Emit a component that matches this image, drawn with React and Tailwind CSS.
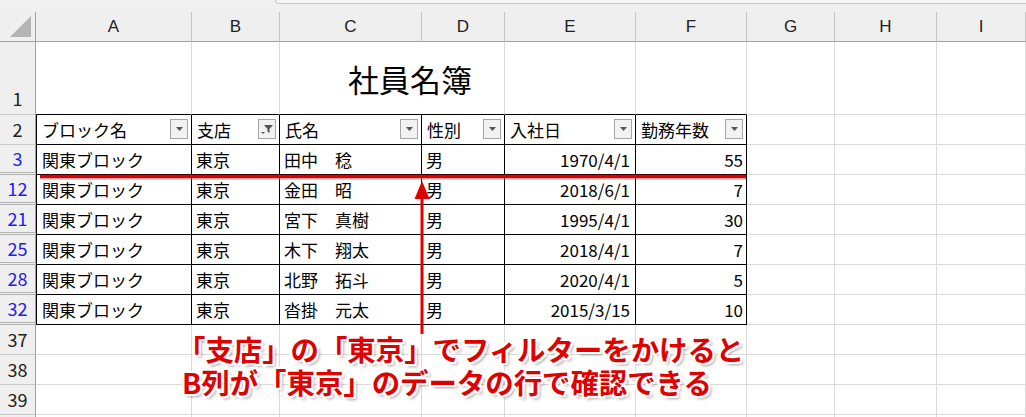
import React from 'react';

const ROWS = [
  { n: 3, a: '関東ブロック', b: '東京', c: '田中　稔', d: '男', e: '1970/4/1', f: 55 },
  { n: 12, a: '関東ブロック', b: '東京', c: '金田　昭', d: '男', e: '2018/6/1', f: 7 },
  { n: 21, a: '関東ブロック', b: '東京', c: '宮下　真樹', d: '男', e: '1995/4/1', f: 30 },
  { n: 25, a: '関東ブロック', b: '東京', c: '木下　翔太', d: '男', e: '2018/4/1', f: 7 },
  { n: 28, a: '関東ブロック', b: '東京', c: '北野　拓斗', d: '男', e: '2020/4/1', f: 5 },
  { n: 32, a: '関東ブロック', b: '東京', c: '沓掛　元太', d: '男', e: '2015/3/15', f: 10 },
];

const HEADERS = ['ブロック名', '支店', '氏名', '性別', '入社日', '勤務年数'];
const LETTERS = ['A', 'B', 'C', 'D', 'E', 'F', 'G', 'H', 'I'];

// cell border styles
const gridCell = 'box-border border-r border-b border-[#dadada]';
const tableCell = 'box-border border-r border-b border-black';

const FilterButton = ({ active }) => (
  <div className="ml-auto mr-[3px] mb-px flex h-[20px] w-[18px] shrink-0 items-center justify-center border border-[#a6a6a6] bg-[#f2f2f2]">
    {active ? (
      <svg width="14" height="12" viewBox="0 0 14 12">
        <path d="M4 2h9l-3.5 4v4l-2-1.2V6z" fill="#555" />
        <path d="M1 9h4l-2 2z" fill="#555" />
      </svg>
    ) : (
      <svg width="7" height="4" viewBox="0 0 7 4">
        <path d="M0 0h7L3.5 4z" fill="#555" />
      </svg>
    )}
  </div>
);

const RowHead = ({ n, blue, hidden, tall }) => (
  <div
    className={`box-border flex justify-center border-r border-[#a0a0a0] bg-[#efefef] text-[18px] ${
      hidden ? 'border-b-[3px] border-b-[#b4b4b4] border-double' : 'border-b border-b-[#c8c8c8]'
    } ${tall ? 'items-end pb-[2px]' : 'items-center'} ${blue ? 'text-[#2020e8]' : 'text-[#222]'}`}
  >
    {n}
  </div>
);

export default function App() {
  return (
    <div className="relative h-[417px] w-[1026px] overflow-hidden bg-white font-['Noto_Sans_CJK_JP','Noto_Sans',sans-serif] text-[17px] text-black">
      {/* top strip */}
      <div className="h-[12px] bg-[#f0f0f0]">
        <div className="ml-[275px] h-[4px] rounded-bl-[6px] border-b border-l border-[#c8c8c8] bg-[#f6f6f6]" />
      </div>

      <div className="grid grid-cols-[36px_156px_88px_142px_83px_131px_111px_88px_102px_89px] grid-rows-[30px_73px_repeat(11,30px)]">
        {/* column header row */}
        <div className="box-border flex items-end justify-end border-r border-b border-[#a0a0a0] bg-[#efefef] pr-[3px] pb-[3px]">
          <svg width="22" height="22" viewBox="0 0 22 22">
            <path d="M21 0V21H0z" fill="#b4b4b4" />
          </svg>
        </div>
        {LETTERS.map((l) => (
          <div
            key={l}
            className="box-border flex items-center justify-center border-r border-b border-r-[#c4c4c4] border-b-[#a0a0a0] bg-[#efefef] font-['Liberation_Sans',sans-serif] text-[17px] text-[#222]"
          >
            {l}
          </div>
        ))}

        {/* row 1: title */}
        <RowHead n={1} tall />
        <div className={`${gridCell} border-b-black`} />
        <div className={`${gridCell} border-b-black`} />
        <div className="box-border flex items-center border-b border-black pl-[68px]">
          <span className="whitespace-nowrap text-[31px] leading-none">社員名簿</span>
        </div>
        <div className={`${gridCell} border-b-black`} />
        <div className={`${gridCell} border-b-black`} />
        <div className={`${gridCell} border-b-black`} />
        <div className={gridCell} />
        <div className={gridCell} />
        <div className={gridCell} />

        {/* row 2: table header */}
        <RowHead n={2} />
        {HEADERS.map((h, i) => (
          <div key={h} className={`${tableCell} flex items-center pl-[5px] ${i === 0 ? 'border-l' : ''}`}>
            <span className="whitespace-nowrap">{h}</span>
            <FilterButton active={i === 1} />
          </div>
        ))}
        <div className={gridCell} />
        <div className={gridCell} />
        <div className={gridCell} />

        {/* filtered rows */}
        {ROWS.map((r) => (
          <React.Fragment key={r.n}>
            <RowHead n={r.n} blue hidden />
            <div className={`${tableCell} flex items-center border-l pl-[5px]`}>{r.a}</div>
            <div className={`${tableCell} flex items-center pl-[4px]`}>{r.b}</div>
            <div className={`${tableCell} flex items-center whitespace-nowrap pl-[4px]`}>{r.c}</div>
            <div className={`${tableCell} flex items-center pl-[4px]`}>{r.d}</div>
            <div className={`${tableCell} flex items-center justify-end pr-[5px]`}>{r.e}</div>
            <div className={`${tableCell} flex items-center justify-end pr-[3px]`}>{r.f}</div>
            <div className={gridCell} />
            <div className={gridCell} />
            <div className={gridCell} />
          </React.Fragment>
        ))}

        {/* empty rows */}
        {[37, 38, 39, 40].map((n) => (
          <React.Fragment key={n}>
            <RowHead n={n === 40 ? '' : n} />
            {LETTERS.map((l) => (
              <div key={l} className={gridCell} />
            ))}
          </React.Fragment>
        ))}
      </div>

      {/* red marks */}
      <svg className="pointer-events-none absolute left-0 top-0" width="1026" height="417">
        <line x1="40" y1="178.5" x2="746" y2="178.5" stroke="#9a9a9a" strokeWidth="3" opacity="0.4" />
        <line x1="40" y1="176.5" x2="746" y2="176.5" stroke="#e00000" strokeWidth="3.5" />
        <line x1="422" y1="196" x2="422" y2="334" stroke="#e00000" strokeWidth="3" />
        <path d="M422 181L414.5 199H429.5z" fill="#e00000" />
      </svg>

      {/* callout */}
      <div className="absolute left-[177px] top-[332px] text-[28.4px] font-bold leading-[33px] text-[#e00000] [text-shadow:2px_0_0_#fff,-2px_0_0_#fff,0_2px_0_#fff,0_-2px_0_#fff,2px_2px_0_#fff,-2px_-2px_0_#fff,2px_-2px_0_#fff,-2px_2px_0_#fff,3px_3px_3px_rgba(0,0,0,0.35)]">
        <div className="whitespace-nowrap">「支店」の「東京」でフィルターをかけると</div>
        <div className="ml-[5px] whitespace-nowrap">B列が「東京」のデータの行で確認できる</div>
      </div>
    </div>
  );
}
